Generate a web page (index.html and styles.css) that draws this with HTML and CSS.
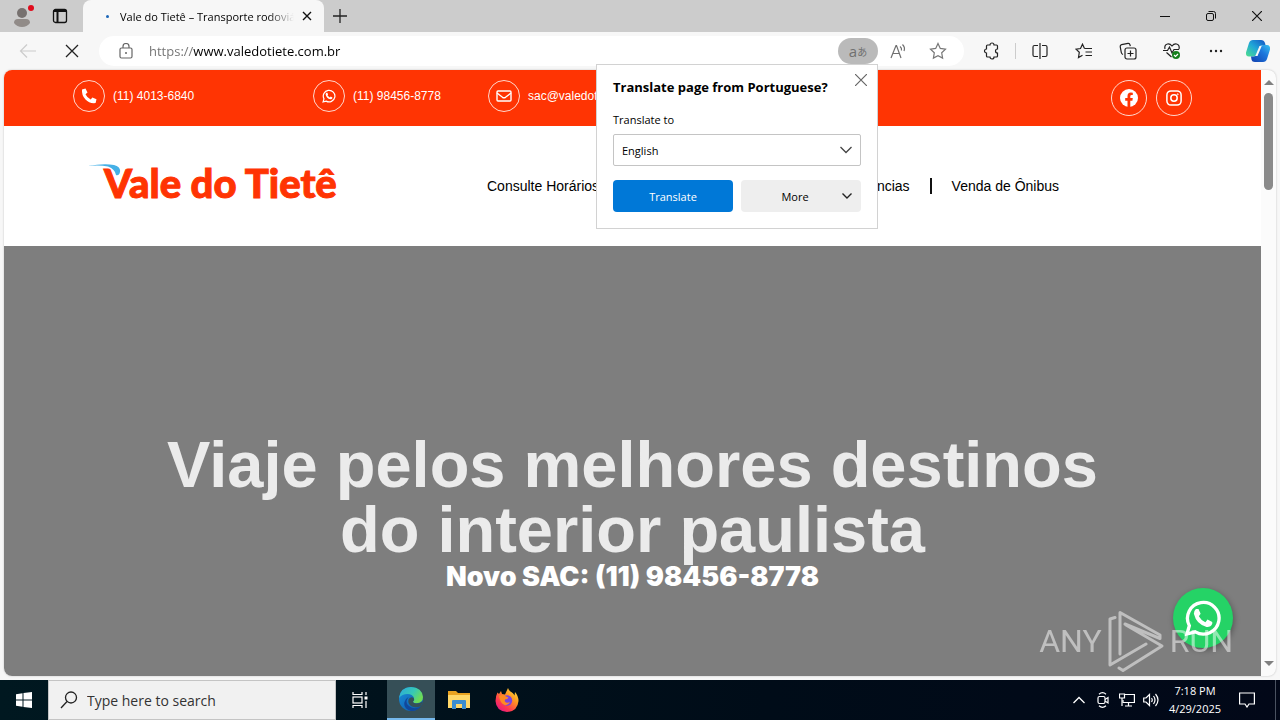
FILE: index.html
```html
<!DOCTYPE html>
<html lang="pt-BR">

<head>
    <meta charset="UTF-8">
    <meta name="viewport" content="width=device-width, initial-scale=1.0">
    <title>Vale do Tietê – Transporte rodoviário</title>
    <link rel="stylesheet" href="styles.css">
</head>

<body>
    <div class="tabstrip">
        <button class="profile" aria-label="Profile">
            <svg width="26" height="26" viewBox="0 0 26 26">
                <circle cx="13" cy="10" r="5" fill="#77716f" />
                <path d="M5 20q0-4 4-4h8q4 0 4 4-3 4-8 4t-8-4z" fill="#918b88" />
                <circle cx="22" cy="5" r="3" fill="#e00b1c" />
            </svg>
        </button>
        <button class="tab-actions" aria-label="Tab actions">
            <svg width="16" height="16" viewBox="0 0 16 16" fill="none" stroke="#111" stroke-width="1.3">
                <rect x="1.5" y="1.5" width="13" height="13" rx="2" />
                <path d="M1.500 3h13M5.500 4v10" stroke-width="2" />
            </svg>
        </button>
        <div class="tab">
            <span class="spinner"></span>
            <span class="tab-title">Vale do Tietê – Transporte rodoviá</span>
            <button class="tab-close" aria-label="Close tab">
                <svg width="10" height="10" viewBox="0 0 10 10" stroke="#111" stroke-width="1.4"><path d="M1 1l8 8M9 1l-8 8" /></svg>
            </button>
        </div>
        <button class="new-tab" aria-label="New tab">
            <svg width="14" height="14" viewBox="0 0 14 14" stroke="#222" stroke-width="1.3"><path d="M7 0v14M0 7h14" /></svg>
        </button>
        <div class="window-buttons">
            <button aria-label="Minimize">
                <svg width="10" height="10" viewBox="0 0 10 10" stroke="#111"><path d="M0 5.500h10" /></svg>
            </button>
            <button aria-label="Restore">
                <svg width="10" height="10" viewBox="0 0 10 10" fill="none" stroke="#111">
                    <rect x=".5" y="2.500" width="7" height="7" rx="1.500" />
                    <path d="M2.500.5h5q2 0 2 2v5" />
                </svg>
            </button>
            <button aria-label="Close">
                <svg width="10" height="10" viewBox="0 0 10 10" stroke="#111" stroke-width="1.2"><path d="M0 0l10 10M10 0L0 10" /></svg>
            </button>
        </div>
    </div>

    <div class="toolbar">
        <button aria-label="Back">
            <svg width="18" height="16" viewBox="0 0 18 16" fill="none" stroke="#ccc" stroke-width="1.2"><path d="M17 8H2M8 1.500L1.500 8 8 14.500" /></svg>
        </button>
        <button aria-label="Stop">
            <svg width="14" height="14" viewBox="0 0 14 14" stroke="#222" stroke-width="1.3"><path d="M1 1l12 12M13 1L1 13" /></svg>
        </button>
        <div class="address">
            <svg class="lock" width="14" height="16" viewBox="0 0 14 16" fill="none" stroke="#666" stroke-width="1.2">
                <rect x="1" y="5" width="12" height="10" rx="1.500" />
                <path d="M4 5V3.500a3 3 0 0 1 6 0V5" />
                <circle cx="7" cy="10" r="1" fill="#666" stroke="none" />
            </svg>
            <input class="url" type="text" aria-label="Address" value="https://www.valedotiete.com.br">
            <button class="translate-toggle" aria-label="Translate">a<small>あ</small></button>
            <button aria-label="Read aloud">
                <svg width="18" height="16" viewBox="0 0 18 16" fill="none" stroke="#707070" stroke-width="1.2">
                    <path d="M2 15L7 2.500h.5L12 15M3.500 10.500h7M11 3.500q2 1.500 1.500 4M13.500 1.500q3 3 1.500 6.500" />
                </svg>
            </button>
            <button aria-label="Add to favorites">
                <svg width="18" height="18" viewBox="0 0 18 18" fill="none" stroke="#777" stroke-width="1.2">
                    <path d="M9 1.500l2.300 4.900 5.200.7-3.800 3.700.9 5.300L9 13.600l-4.600 2.500.9-5.300-3.800-3.700 5.200-.7z" />
                </svg>
            </button>
        </div>
        <button aria-label="Extensions">
            <svg width="16" height="18" viewBox="0 0 16 18" fill="none" stroke="#222" stroke-width="1.200">
                <path d="M4.500 3H7a2 2 0 0 1 4 0h2.500q1 0 1 1v3a2 2 0 0 0 0 4v3q0 1-1 1H11a2 2 0 0 1-4 0H4.500q-1 0-1-1v-3a2 2 0 0 1 0-4V4q0-1 1-1z" />
            </svg>
        </button>
        <span class="divider"></span>
        <button aria-label="Split screen">
            <svg width="16" height="16" viewBox="0 0 16 16" fill="none" stroke="#222" stroke-width="1.200">
                <path d="M6 2.500H2.500q-1.500 0-1.500 1.500v8q0 1.500 1.500 1.500H6M10 2.500h3.500q1.500 0 1.500 1.500v8q0 1.500-1.500 1.500H10M8 0v16" />
            </svg>
        </button>
        <button aria-label="Favorites">
            <svg width="18" height="16" viewBox="0 0 18 16" fill="none" stroke="#222" stroke-width="1.200">
                <path d="M9.500 5.500L7.500 1.200l-2 4.300-4.500.6 3.300 3.200-.8 5.200 4-2.300M9.500 5.500H17M10.500 9H17M10.500 12.500H17" />
            </svg>
        </button>
        <button aria-label="Collections">
            <svg width="18" height="18" viewBox="0 0 18 18" fill="none" stroke="#222" stroke-width="1.200">
                <path d="M4 12.500Q2.600 12 2.300 10.500L1.200 4.700Q1 3 2.600 2.600L9 1.400q1.600-.2 2 1.400l.3 1.400" />
                <rect x="6" y="6" width="11" height="11" rx="2" />
                <path d="M11.500 8.500v6M8.500 11.500h6" />
            </svg>
        </button>
        <button aria-label="Browser essentials">
            <svg width="18" height="18" viewBox="0 0 18 18" fill="none" stroke="#222" stroke-width="1.200">
                <path d="M2 7Q1 3 4.500 2 7 1.500 9 4q2-2.500 4.500-2Q17 3 16 7M0 8.500h4.500L6.500 5 9 11l2-3.500h5M3.500 10.500L8.500 15" />
                <circle cx="13" cy="13" r="4" fill="#16801d" stroke="none" />
                <path d="M11 13l1.500 1.500L15 12" stroke="#fff" />
            </svg>
        </button>
        <button aria-label="Settings and more">
            <svg width="14" height="4" viewBox="0 0 14 4" fill="#222"><circle cx="2" cy="2" r="1.200" /><circle cx="7" cy="2" r="1.200" /><circle cx="12" cy="2" r="1.200" /></svg>
        </button>
        <button class="copilot" aria-label="Copilot">
            <svg width="26" height="24" viewBox="0 0 26 24">
                <defs>
                    <linearGradient id="cpA" x1="0" y1="1" x2="1" y2="0"><stop offset="0" stop-color="#4fe08c" /><stop offset=".5" stop-color="#20a6d8" /><stop offset="1" stop-color="#1553c4" /></linearGradient>
                    <linearGradient id="cpB" x1="0" y1="1" x2="1" y2="0"><stop offset="0" stop-color="#123fae" /><stop offset=".6" stop-color="#1d78dd" /><stop offset="1" stop-color="#3ac3f0" /></linearGradient>
                </defs>
                <path d="M8 1h8q3 0 4 3l.5 2h-3q-2.500 0-3.300 2.500L12 15q-1 2.500-4 2.500H4q-3.500 0-3-4L4 4Q5 1 8 1z" fill="url(#cpA)" />
                <path d="M18 23h-8q-3 0-3.500-2.500L6 17.500h2.500q2.500 0 3.300-2.500L14 8.500Q15 6 18 6h4q3.500 0 3 4.500L22 20q-1 3-4 3z" fill="url(#cpB)" />
                <path d="M14.500 7h2.200l-4.200 10h-2.200z" fill="#f7f7f7" />
            </svg>
        </button>
    </div>

    <div class="viewport">
        <div class="site">
            <div class="topbar">
                <a class="contact" href="#">
                    <span class="ring">
                        <svg width="16" height="16" viewBox="0 0 16 16" fill="#fff"><path d="M1 1.500L4.500.5l2 4-2 1.700q1.500 3.500 5.200 5.200l1.700-2 4.100 1.900-.9 3.700Q8.500 15.800 4.500 11.500 .5 7.500 1 1.500z" /></svg>
                    </span>
                    (11) 4013-6840
                </a>
                <a class="contact" href="#">
                    <span class="ring">
                        <svg width="14" height="14" viewBox="0 0 32 32"><use href="#whats" /></svg>
                    </span>
                    (11) 98456-8778
                </a>
                <a class="contact" href="#">
                    <span class="ring">
                        <svg width="16" height="12" viewBox="0 0 16 12" fill="none" stroke="#fff" stroke-width="1.400"><rect x="1" y="1" width="14" height="10" rx="1" /><path d="M1 3l5.500 4.300q1.500 1 3 0L15 3" /></svg>
                    </span>
                    sac@valedotiete.com.br
                </a>
                <a class="social" href="#" aria-label="Facebook">
                    <svg width="18" height="18" viewBox="0 0 18 18"><circle cx="9" cy="9" r="9" fill="#fff" /><path d="M7.500 18v-6.300H5.200V9h2.300V7q0-3.500 3.300-3.500l2 .2v2.200h-1.200q-1.300 0-1.300 1.400V9h2.500l-.4 2.700h-2.100V18z" fill="#ff3403" /></svg>
                </a>
                <a class="social" href="#" aria-label="Instagram">
                    <svg width="16" height="16" viewBox="0 0 18 18" fill="none" stroke="#fff" stroke-width="1.700"><rect x="1" y="1" width="16" height="16" rx="4.500" /><circle cx="9" cy="9" r="3.600" /><circle cx="13.200" cy="4.800" r=".6" stroke-width="1" /></svg>
                </a>
            </div>

            <div class="header">
                <a class="logo" href="#">
                    <svg class="swoosh" width="33" height="12" viewBox="0 0 33 12"><path d="M0 2Q16-1 26 1q7 2 6 7-1 4-4 3-1-6-8-8.500Q12 1 0 2z" fill="#45b0e6" /></svg>
                    Vale do Tietê
                </a>
                <ul class="nav">
                    <li><a href="#">Consulte Horários</a></li>
                    <li><a href="#">Agências</a></li>
                    <li><a href="#">Venda de Ônibus</a></li>
                </ul>
            </div>

            <div class="hero">
                <h1>Viaje pelos melhores destinos<br>do interior paulista</h1>
                <p>Novo SAC: (11) 98456-8778</p>
                <a class="whatsapp" href="#" aria-label="WhatsApp">
                    <svg width="38" height="38" viewBox="0 0 32 32">
                        <g id="whats">
                            <path d="M2.500 29.500l2-7A13.300 13.300 0 1 1 9.500 27.700z" fill="none" stroke="#fff" stroke-width="2.800" />
                            <path d="M10 8.500h2.200l1.800 4-1.500 2q2 3.700 5.500 5l1.800-2.200 4 2v1.500q-1.300 3-4.800 2.700Q10.500 21.500 8.300 12.500 8.300 10 10 8.500z" fill="#fff" />
                        </g>
                    </svg>
                </a>
            </div>
        </div>
        <div class="scrollbar">
            <span class="arrow-up"></span>
            <span class="thumb"></span>
            <span class="arrow-down"></span>
        </div>
    </div>

    <div class="popup" role="dialog" aria-labelledby="popup-title">
        <h2 id="popup-title">Translate page from Portuguese?</h2>
        <button class="popup-close" aria-label="Dismiss">
            <svg width="12" height="12" viewBox="0 0 12 12" stroke="#666" stroke-width="1.200"><path d="M0 0l12 12M12 0L0 12" /></svg>
        </button>
        <label for="language">Translate to</label>
        <div class="select">
            <select id="language">
                <option>English</option>
            </select>
            <svg width="12" height="8" viewBox="0 0 12 8" fill="none" stroke="#444" stroke-width="1.300"><path d="M.5 1L6 6.500 11.500 1" /></svg>
        </div>
        <div class="actions">
            <button class="primary">Translate</button>
            <button class="more">More
                <svg width="10" height="6" viewBox="0 0 10 6" fill="none" stroke="#222" stroke-width="1.400"><path d="M.5.5L5 5 9.500.5" /></svg>
            </button>
        </div>
    </div>

    <div class="watermark">
        <span>ANY</span>
        <svg width="56" height="62" viewBox="0 0 56 62" fill="none" stroke="#fff" stroke-width="3" stroke-linejoin="round" stroke-linecap="round">
            <path d="M12 44V2.500L52 25v3.500L17 14M7 7.500L2 9v46L38 34M11 58l4 2.500L54 36 18 15" />
        </svg>
        <span>RUN</span>
    </div>

    <div class="taskbar">
        <button aria-label="Start">
            <svg width="16" height="16" viewBox="0 0 16 16" fill="#fff"><path d="M0 2.200l6.500-.9v6.200H0zM7.500 1.100L16 0v7.500H7.500zM0 8.500h6.500v6.200L0 13.800zM7.500 8.500H16V16l-8.500-1.100z" /></svg>
        </button>
        <div class="search">
            <svg width="18" height="18" viewBox="0 0 18 18" fill="none" stroke="#222" stroke-width="1.300"><circle cx="11" cy="6.500" r="5.500" /><path d="M7 10.500L1 17" /></svg>
            <input type="text" aria-label="Search" placeholder="Type here to search">
        </div>
        <button class="task-view" aria-label="Task View">
            <svg width="16" height="16" viewBox="0 0 16 16" fill="none" stroke="#fff" stroke-width="1.200"><path d="M1 0v2.500h9V0M1 16v-2.500h9V16M14 0v3M14 9v7" /><rect x="1" y="5" width="9" height="6" /><path d="M12.500 6h3" stroke-width="3" /></svg>
        </button>
        <button class="active" aria-label="Microsoft Edge">
            <svg width="24" height="24" viewBox="0 0 24 24">
                <defs>
                    <linearGradient id="edA" x1="0" y1="0" x2="1" y2=".5"><stop offset="0" stop-color="#2ba7dd" /><stop offset=".6" stop-color="#37c9b5" /><stop offset="1" stop-color="#6fdc53" /></linearGradient>
                    <linearGradient id="edB" x1="0" y1="0" x2="1" y2="1"><stop offset="0" stop-color="#1a90db" /><stop offset="1" stop-color="#0c54a5" /></linearGradient>
                </defs>
                <circle cx="12" cy="12" r="12" fill="url(#edB)" />
                <path d="M0 11Q1.500 0 12 0q11 .5 12 10 0 6-6.500 6.300-3.500 0-3.500-1.800 1.500-1.500 1-3.500Q13.500 7 8.500 7 3 7 0 11z" fill="url(#edA)" />
                <path d="M9.500 10Q4.500 17 12.500 20.500q5 2 9.500-1.500Q18 24.500 12 24 4 22 5.500 15 6.500 11.500 9.500 10z" fill="#11479a" />
                <path d="M14 14.500q0 2 4 1.900 3.500 0 5.500-2-.3 3-2 4.800-4.500 2-8.500.3-4.500-2.500-3.500-7 1-2 3-2.200 2.500 0 2.700 2 0 1.200-1.200 2.200z" fill="#364f57" />
            </svg>
        </button>
        <button aria-label="File Explorer">
            <svg width="22" height="20" viewBox="0 0 22 20"><path d="M0 1h8l2 2h12v15H0z" fill="#e9a321" /><path d="M0 5h22v13H0z" fill="#ffd869" /><path d="M4 19v-8q0-1 1-1h12q1 0 1 1v8h-4v-5H8v5z" fill="#3b8ed0" /></svg>
        </button>
        <button aria-label="Firefox">
            <svg width="24" height="24" viewBox="0 0 24 24">
                <defs>
                    <linearGradient id="ff" x1="1" y1="0" x2=".2" y2="1"><stop offset="0" stop-color="#fff04a" /><stop offset=".4" stop-color="#ff9820" /><stop offset=".75" stop-color="#ff3750" /><stop offset="1" stop-color="#e31587" /></linearGradient>
                </defs>
                <path d="M2.500 4.500L4 6l2-3 1 3 3 .5L13 0q1 3 4 4.500 1.500 1 2.500 3L20 4q3.500 4 3.500 9-1 10.500-11.500 11Q1 23 .5 13q0-5 2-8.500z" fill="url(#ff)" />
                <circle cx="12" cy="12.500" r="5.200" fill="#7a43e0" />
                <path d="M4 8q4-2 7 .5l2.500 1q-1 2-3.500 2-1 2 1 3 2 .5 4-.5Q13 18 9.500 17 5 15 4 8z" fill="#ff8a22" />
            </svg>
        </button>
        <div class="tray">
            <button aria-label="Show hidden icons">
                <svg width="12" height="8" viewBox="0 0 12 8" fill="none" stroke="#fff" stroke-width="1.300"><path d="M.5 7L6 1.500 11.500 7" /></svg>
            </button>
            <button aria-label="Meet Now">
                <svg width="12" height="16" viewBox="0 0 12 16" fill="none" stroke="#fff" stroke-width="1.200"><rect x="1" y="4.500" width="7" height="7" rx="1.500" /><path d="M8 7.500L11 5.500v5.500L8 9M2 2.200q3.500-3 7 0M2 13.800q3.500 3 7 0" /></svg>
            </button>
            <button aria-label="Network">
                <svg width="16" height="14" viewBox="0 0 16 14" fill="none" stroke="#fff" stroke-width="1.200"><path d="M6 1.500h9.400v8H4V7M9.500 9.500V13M6 13h7" /><path d="M.5 1h5v4h-5zM3 5v8" /></svg>
            </button>
            <button aria-label="Volume">
                <svg width="16" height="14" viewBox="0 0 16 14" fill="none" stroke="#fff" stroke-width="1.200"><path d="M.7 5H3l3.500-3.500v11L3 9H.7zM8.500 5q1.500 2 0 4M10.500 3q3 4 0 8M12.500 1q5 6 0 12" /></svg>
            </button>
            <div class="clock">7:18 PM<br>4/29/2025</div>
            <button class="notifications" aria-label="Notifications">
                <svg width="16" height="16" viewBox="0 0 16 16" fill="none" stroke="#fff" stroke-width="1.200"><path d="M.6 1h14.800v11H10l-2 3-2-3H.6z" /></svg>
            </button>
        </div>
    </div>
</body>

</html>
```
FILE: styles.css
```css
* {
    box-sizing: border-box;
}

body {
    position: relative;
    min-height: 100vh;
    margin: 0;
    display: flex;
    flex-direction: column;
    background-color: #f7f7f7;
    color: #000000;
    font-family: "Open Sans", "Noto Sans CJK JP", sans-serif;
    font-size: 11px;
}

button {
    display: flex;
    align-items: center;
    justify-content: center;
    flex-shrink: 0;
    padding: 0;
    border: none;
    background: none;
    font: inherit;
}

a {
    color: inherit;
    text-decoration: none;
}

svg {
    flex-shrink: 0;
}

/* tabs */
.tabstrip {
    display: flex;
    height: 32px;
    background-color: #cccccc;
}

.profile {
    width: 44px;
}

.tab-actions {
    width: 32px;
    margin-right: 7px;
}

.tab {
    display: flex;
    align-items: center;
    width: 241px;
    padding: 0 8px 0 23px;
    border-radius: 8px 8px 0 0;
    background-color: #f7f7f7;
}

.spinner {
    width: 3px;
    height: 3px;
    margin-right: 11px;
    border-radius: 50%;
    background-color: #1b66b8;
}

.tab-title {
    flex: 1;
    overflow: hidden;
    white-space: nowrap;
    -webkit-mask-image: linear-gradient(90deg, #000 85%, transparent);
    mask-image: linear-gradient(90deg, #000 85%, transparent);
}

.tab-close {
    width: 18px;
    height: 18px;
    margin-left: 4px;
}

.new-tab {
    width: 32px;
}

.window-buttons {
    display: flex;
    margin-left: auto;
}

.window-buttons button {
    width: 46px;
}

/* toolbar */
.toolbar {
    display: flex;
    align-items: center;
    height: 38px;
    padding: 0 2px 0 6px;
}

.toolbar button {
    width: 44px;
    height: 30px;
}

.toolbar .copilot {
    width: 40px;
}

.divider {
    width: 1px;
    height: 16px;
    margin: 0 2px;
    background-color: #cccccc;
}

.address {
    flex: 1;
    display: flex;
    align-items: center;
    height: 30px;
    margin: 0 5px;
    padding: 0 6px 0 20px;
    border-radius: 15px;
    background-color: #ffffff;
}

.address button {
    width: 40px;
}

.url {
    flex: 1;
    min-width: 0;
    margin-left: 16px;
    padding: 0;
    border: none;
    outline: none;
    background: linear-gradient(90deg, #707070 44px, #000000 44px);
    -webkit-background-clip: text;
    background-clip: text;
    color: transparent;
    font: 13px "Open Sans", sans-serif;
}

.address .translate-toggle {
    height: 26px;
    border-radius: 13px;
    background-color: #bababa;
    color: #707070;
    font-size: 15px;
}

.translate-toggle small {
    font-size: 10px;
}

/* page */
.viewport {
    flex: 1;
    display: flex;
    margin: 0 4px 4px;
    border-radius: 8px;
    background-color: #fbfbfb;
    overflow: hidden;
    box-shadow: 0 0 2px #bbbbbb;
}

.site {
    flex: 1;
    display: flex;
    flex-direction: column;
    background-color: #ffffff;
    font-family: "Liberation Sans", Arial, sans-serif;
}

.topbar {
    display: grid;
    grid-template-columns: 240px 175px 1fr auto auto;
    align-items: start;
    height: 56px;
    padding: 10px 69px;
    background-color: #ff3403;
    color: #ffffff;
}

.contact {
    display: flex;
    align-items: center;
    gap: 8px;
    font-size: 12px;
}

.ring,
.social {
    display: grid;
    place-content: center;
    width: 32px;
    height: 32px;
    border: 1px solid #ffffffcc;
    border-radius: 50%;
}

.social {
    width: 36px;
    height: 36px;
    margin-left: 9px;
}

.header {
    display: flex;
    align-items: center;
    height: 120px;
    padding: 0 202px 0 100px;
}

.logo {
    position: relative;
    width: 236px;
    color: #ff3403;
    font-family: Lato, sans-serif;
    font-size: 40px;
    font-weight: 900;
    line-height: 48px;
    padding-bottom: 6px;
    white-space: nowrap;
    -webkit-text-stroke: 1px #ff3403;
}

.swoosh {
    position: absolute;
    top: 5px;
    left: -16px;
}

.nav {
    flex: 1;
    display: flex;
    margin: 0 0 0 147px;
    padding: 0;
    list-style: none;
    font-size: 14px;
}

.nav li:first-child {
    flex: 1;
}

.nav li:last-child {
    margin-left: 20px;
    padding-left: 20px;
    border-left: 2px solid #111111;
}

.hero {
    position: relative;
    flex: 1;
    padding: 186px 20px 80px;
    background-color: #7e7e7e;
    color: #ffffff;
    text-align: center;
}

.hero h1 {
    margin: 0;
    color: #ebebeb;
    font-size: 65px;
    line-height: 65px;
}

.hero p {
    margin: 0;
    font-family: Inter, sans-serif;
    font-size: 27px;
    font-weight: 900;
    line-height: 30px;
}

.whatsapp {
    position: absolute;
    right: 28px;
    bottom: 28px;
    display: grid;
    place-content: center;
    width: 60px;
    height: 60px;
    border-radius: 50%;
    background-color: #25d366;
    box-shadow: 1px 2px 6px #00000055;
}

.scrollbar {
    display: flex;
    flex-direction: column;
    align-items: center;
    width: 15px;
    padding: 10px 0;
}

.arrow-up,
.arrow-down {
    border: 5px solid transparent;
    border-top: none;
    border-bottom-color: #808080;
}

.arrow-down {
    margin-top: auto;
    border-top: 5px solid #808080;
    border-bottom: none;
}

.thumb {
    width: 9px;
    height: 97px;
    margin-top: 8px;
    border-radius: 5px;
    background-color: #8a8a8a;
}

/* translate popup */
.popup {
    position: absolute;
    top: 64px;
    right: 402px;
    width: 282px;
    padding: 12px 16px 16px;
    border: 1px solid #d2d2d2;
    background-color: #ffffff;
}

.popup h2 {
    margin: 0 0 15px;
    font-size: 13px;
    line-height: 20px;
    white-space: nowrap;
}

.popup-close {
    position: absolute;
    top: 5px;
    right: 6px;
    width: 20px;
    height: 20px;
}

.popup label {
    display: block;
    margin-bottom: 6px;
    line-height: 16px;
}

.select {
    position: relative;
}

.select select {
    width: 100%;
    height: 32px;
    padding: 0 8px;
    border: 1px solid #c4c4c4;
    border-radius: 2px;
    background-color: #ffffff;
    color: #000000;
    font: inherit;
    appearance: none;
}

.select svg {
    position: absolute;
    top: 12px;
    right: 9px;
    pointer-events: none;
}

.actions {
    display: grid;
    grid-template-columns: 1fr 1fr;
    gap: 8px;
    margin-top: 14px;
}

.actions button {
    position: relative;
    height: 32px;
    border-radius: 4px;
}

.actions .primary {
    background-color: #0078d7;
    color: #ffffff;
}

.actions .more {
    padding-right: 12px;
    background-color: #eeeeee;
}

.more svg {
    position: absolute;
    right: 9px;
}

/* watermark */
.watermark {
    position: absolute;
    right: 47px;
    bottom: 48px;
    display: flex;
    align-items: center;
    gap: 6px;
    color: #ffffff;
    font: 32px Roboto, sans-serif;
    opacity: .5;
    pointer-events: none;
}

/* taskbar */
.taskbar {
    display: flex;
    height: 40px;
    background: linear-gradient(90deg, #001820, #000c18 60%, #020818);
    color: #ffffff;
}

.taskbar button {
    width: 48px;
}

.search {
    display: flex;
    align-items: center;
    gap: 9px;
    width: 288px;
    padding: 0 11px;
    border: 1px solid #c4c4c4;
    background-color: #f1f1f1;
}

.search input {
    flex: 1;
    min-width: 0;
    padding: 0;
    border: none;
    outline: none;
    background: none;
    font: 14px "Open Sans", sans-serif;
}

.search input::placeholder {
    color: #333333;
}

.taskbar .task-view {
    margin-right: 3px;
}

.taskbar .active {
    border-bottom: 2px solid #76b9ed;
    background-color: #364f57;
}

.tray {
    display: flex;
    margin-left: auto;
    margin-right: 4px;
    border-right: 1px solid #4a5260;
}

.tray button {
    width: 24px;
}

.clock {
    width: 64px;
    text-align: center;
    line-height: 18px;
    padding-top: 2px;
}

.tray .notifications {
    width: 40px;
    margin-right: 8px;
}
```
